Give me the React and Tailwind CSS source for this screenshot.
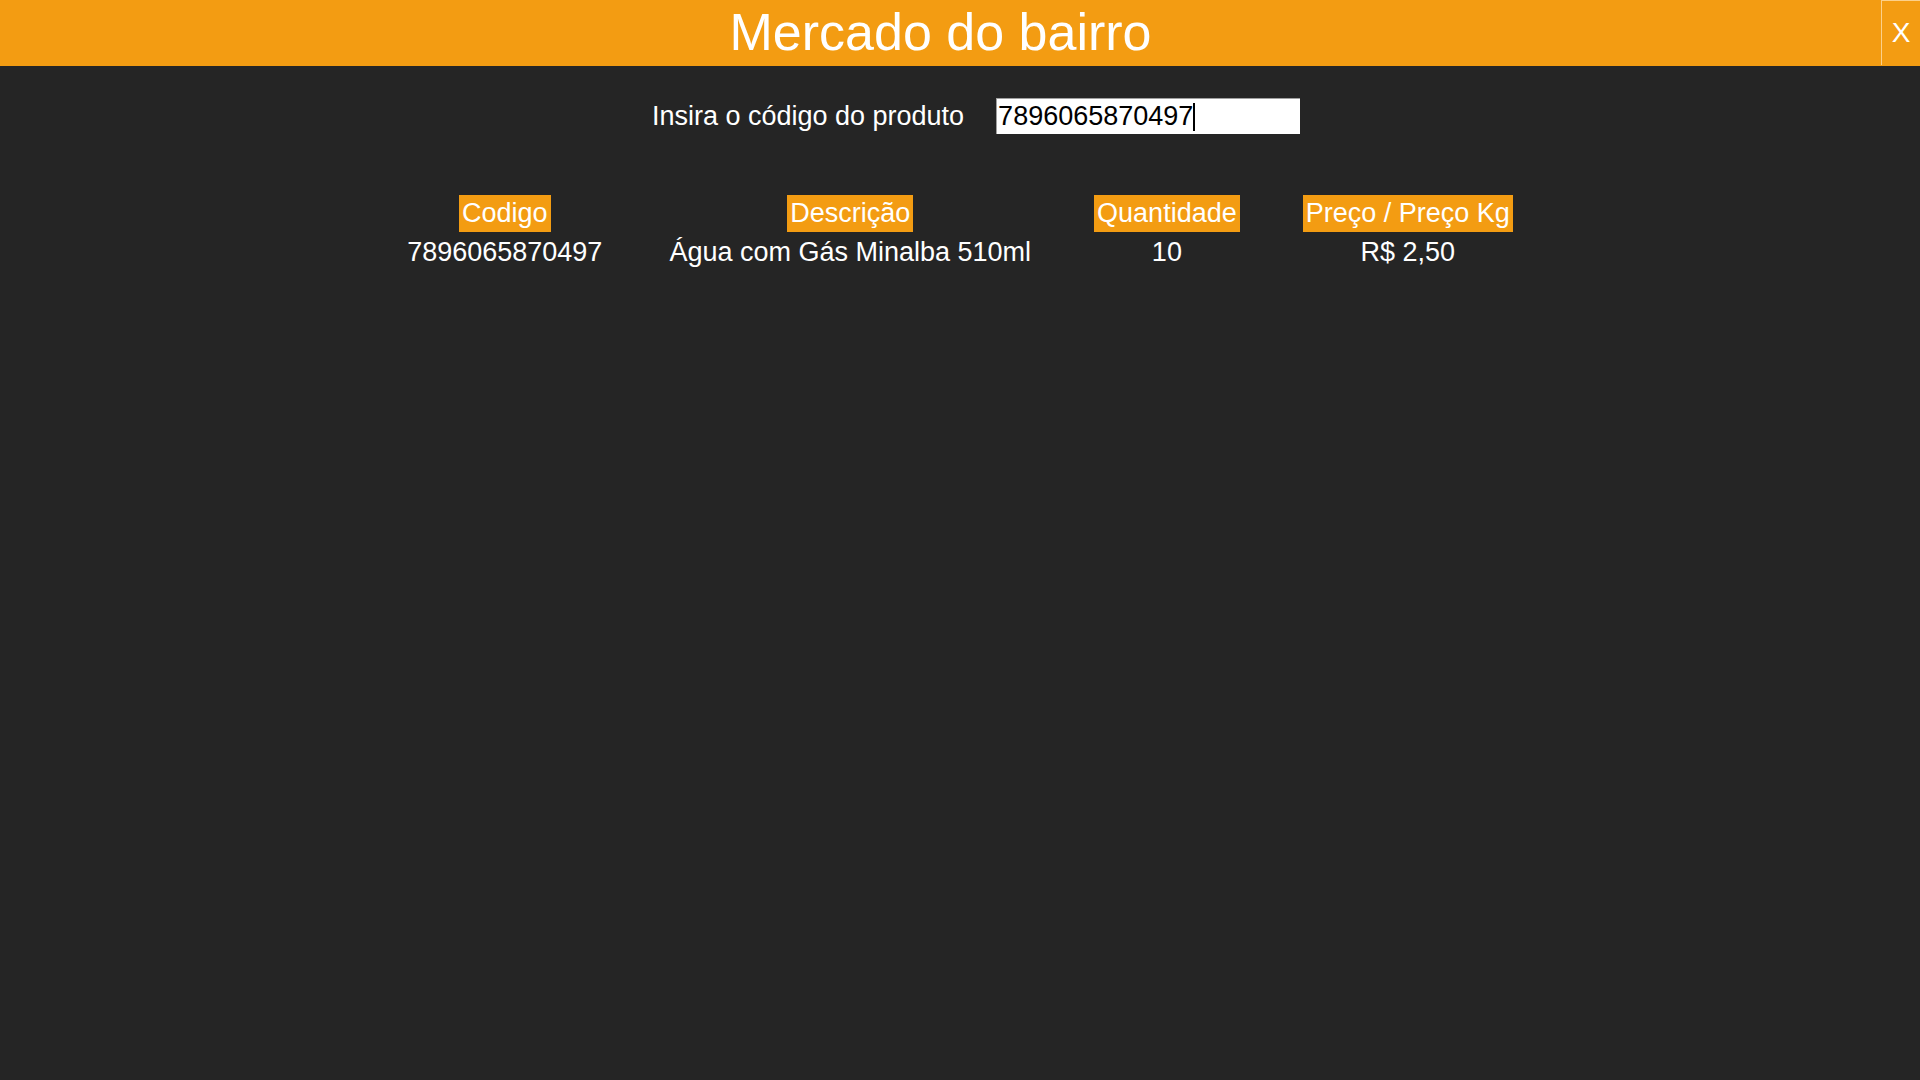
const COLS = ['Codigo', 'Descrição', 'Quantidade', 'Preço / Preço Kg'];

const ROWS = [
  { codigo: '7896065870497', descricao: 'Água com Gás Minalba 510ml', quantidade: '10', preco: 'R$ 2,50' },
];

export default function App() {
  return (
    <div className="min-h-screen w-full bg-[#252525] text-white font-['Liberation_Sans',Arial,sans-serif]">
      {/* Top bar */}
      <div className="flex h-[66px] bg-[#f39c12]">
        <h1 className="flex-1 flex items-center justify-center text-[52px] leading-[1.15]">Mercado do bairro</h1>
        <button className="w-[39px] h-[65px] border-l border-t border-[#fcd08a] bg-[#f39c12] text-[28px] leading-none flex items-center justify-center text-white">
          X
        </button>
      </div>

      {/* Product code input */}
      <div className="flex items-center justify-center gap-[32px] pl-[32px] mt-[30px] text-[27px]">
        <span>Insira o código do produto</span>
        <div className="w-[304px] h-[36px] bg-white border-l border-t border-[#a0a0a0] flex items-center pl-[1px] text-black">
          <span className="leading-none">7896065870497</span>
          <span className="w-[2px] h-[28px] bg-black" />
        </div>
      </div>

      {/* Products table */}
      <div className="grid grid-cols-[repeat(4,auto)] justify-center gap-x-[63px] mt-[56px] text-[27px]">
        {COLS.map((c, i) => (
          <div key={c} className={i === 0 ? 'text-center pr-[4px]' : 'text-center'}>
            <span className="inline-block bg-[#f39c12] px-[3px] leading-[37px]">{c}</span>
          </div>
        ))}
        {ROWS.map((r) => (
          <div key={r.codigo} className="contents">
            <div className="text-center leading-[31px] pt-[4px] pr-[4px]">{r.codigo}</div>
            <div className="text-center leading-[31px] pt-[4px]">{r.descricao}</div>
            <div className="text-center leading-[31px] pt-[4px]">{r.quantidade}</div>
            <div className="text-center leading-[31px] pt-[4px]">{r.preco}</div>
          </div>
        ))}
      </div>
    </div>
  );
}
